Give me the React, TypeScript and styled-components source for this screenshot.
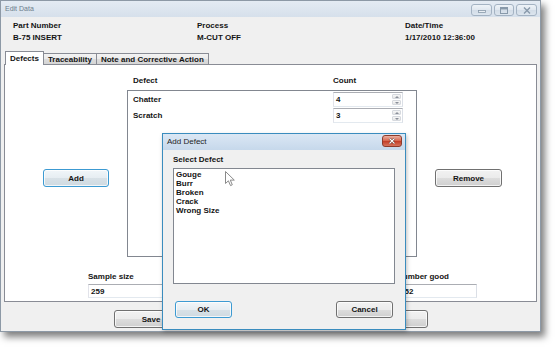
import React from "react";
import styled, { createGlobalStyle } from "styled-components";

const GlobalStyle = createGlobalStyle`
  html, body {
    margin: 0;
    padding: 0;
    background: #ffffff;
  }
  body {
    font-family: "Liberation Sans", Arial, sans-serif;
    font-size: 8px;
    color: #141414;
  }
  * {
    box-sizing: border-box;
  }
`;

const Stage = styled.div`
  position: relative;
  width: 555px;
  height: 351px;
  overflow: hidden;
  background: #ffffff;
`;

const Window = styled.div`
  width: 541px;
  height: 332px;
  display: flex;
  flex-direction: column;
  border: 1px solid #8d99a6;
  background: #f0f0f0;
  box-shadow: 4px 5px 7px rgba(0, 0, 0, 0.5);
`;

const TitleBar = styled.div`
  height: 16px;
  display: flex;
  align-items: flex-start;
  justify-content: space-between;
  background: linear-gradient(#e4ebf3, #d6e0eb);
`;

const Caption = styled.span`
  padding: 4px 0 0 4px;
  font-size: 7px;
  line-height: 8px;
  color: #6d7d8d;
`;

const CaptionButtons = styled.div`
  display: flex;
  gap: 2px;
  margin: 3px 3px 0 0;
`;

const CaptionButton = styled.div<{ $w: number }>`
  width: ${(p) => p.$w}px;
  height: 12px;
  border: 1px solid #a4b3c3;
  border-radius: 3px;
  background: linear-gradient(#eef3f8, #e1e8f0 45%, #d3dde8 55%, #dce5ee);
  display: flex;
  align-items: center;
  justify-content: center;
`;

const Client = styled.div`
  flex: 1;
  display: flex;
  flex-direction: column;
  padding: 0 3px;
`;

const Header = styled.div`
  display: grid;
  grid-template-columns: 184px 208px 1fr;
  margin-top: 3px;
  padding-left: 9px;
`;

const Line = styled.div`
  font-weight: bold;
  line-height: 12px;
  white-space: nowrap;
`;

const TabStrip = styled.div`
  display: flex;
  align-items: flex-end;
  height: 13px;
  margin-top: 7px;
  padding-left: 1px;
  position: relative;
  z-index: 1;
`;

const Tab = styled.div<{ $active?: boolean }>`
  height: ${(p) => (p.$active ? 14 : 11)}px;
  margin-bottom: ${(p) => (p.$active ? -1 : 0)}px;
  margin-left: -1px;
  padding: 0 4px;
  display: flex;
  align-items: center;
  border: 1px solid #898c95;
  border-bottom: none;
  font-weight: bold;
  white-space: nowrap;
  background: ${(p) =>
    p.$active ? "#ffffff" : "linear-gradient(#f3f3f3, #ebebeb 50%, #dddddd 51%, #d5d5d5)"};
  position: relative;
  z-index: ${(p) => (p.$active ? 2 : 1)};

  &:first-child {
    margin-left: 0;
  }
`;

const TabPanel = styled.div`
  height: 238px;
  border: 1px solid #898c95;
  background: #ffffff;
`;

const DefectGrid = styled.div`
  display: grid;
  grid-template-columns: 122px 290px 1fr;
  grid-template-rows: 12px 167px;
  row-gap: 3px;
  padding-top: 10px;
`;

const ColumnHeads = styled.div`
  grid-column: 2;
  grid-row: 1;
  display: grid;
  grid-template-columns: 200px 1fr;
  padding-left: 6px;
  font-weight: bold;
  line-height: 12px;
`;

const ListBox = styled.div<{ $col?: number }>`
  grid-column: ${(p) => p.$col ?? "auto"};
  grid-row: 2;
  border: 1px solid #828790;
  background: #ffffff;
`;

const DefectRows = styled.div`
  display: flex;
  flex-direction: column;
  gap: 1px;
  padding: 1px 0 0 5px;
`;

const DefectRow = styled.div`
  display: grid;
  grid-template-columns: 200px 70px;
  align-items: center;
  height: 15px;
  font-weight: bold;
`;

const Spinner = styled.div`
  height: 15px;
  display: flex;
  align-items: center;
  justify-content: space-between;
  border: 1px solid #abadb3;
  border-color: #abadb3 #dbdfe6 #e3e9ef #e2e3ea;
  padding: 0 1px 0 2px;
`;

const SpinButtons = styled.div`
  width: 9px;
  height: 11px;
  display: flex;
  flex-direction: column;
  gap: 1px;
`;

const SpinHalf = styled.div`
  flex: 1;
  border: 1px solid #d6d9de;
  border-radius: 1px;
  background: linear-gradient(#f7f7f7, #e6e6e6);
  display: flex;
  align-items: center;
  justify-content: center;
`;

const Arrow = styled.div<{ $up?: boolean }>`
  width: 0;
  height: 0;
  border-left: 2px solid transparent;
  border-right: 2px solid transparent;
  ${(p) => (p.$up ? "border-bottom: 2px solid #8a8f99;" : "border-top: 2px solid #8a8f99;")}
`;

const PushButton = styled.button<{ $w: number; $default?: boolean }>`
  width: ${(p) => p.$w}px;
  height: 18px;
  padding: 0;
  font: bold 8px "Liberation Sans", Arial, sans-serif;
  color: #141414;
  border: 1px solid ${(p) => (p.$default ? "#3c9ad2" : "#707070")};
  border-radius: 3px;
  background: ${(p) =>
    p.$default
      ? "linear-gradient(#f1f6f9, #e6edf2 50%, #d8e1e7 51%, #cfdae1)"
      : "linear-gradient(#f2f2f2, #ebebeb 50%, #dddddd 51%, #cfcfcf)"};
  box-shadow: inset 0 0 0 1px rgba(255, 255, 255, 0.75);
`;

const SideButton = styled(PushButton)<{ $left: number }>`
  grid-row: 2;
  align-self: start;
  margin: 79px 0 0 ${(p) => p.$left}px;
`;

const FieldRow = styled.div`
  display: grid;
  grid-template-columns: 83px 80px 229px 80px;
  margin-top: 14px;
`;

const Field = styled.div<{ $col: number }>`
  grid-column: ${(p) => p.$col};
  display: flex;
  flex-direction: column;
`;

const TextBox = styled.div`
  height: 14px;
  margin-top: 1px;
  padding-left: 2px;
  display: flex;
  align-items: center;
  border: 1px solid #abadb3;
  border-color: #abadb3 #dbdfe6 #e3e9ef #e2e3ea;
  background: #ffffff;
  font-weight: bold;
`;

const ButtonRow = styled.div`
  display: flex;
  justify-content: center;
  gap: 164px;
  margin-top: 8px;
`;

const Dialog = styled.div`
  position: absolute;
  left: 162px;
  top: 133px;
  width: 244px;
  height: 197px;
  display: flex;
  flex-direction: column;
  border: 1px solid #3a8cbe;
  background: #f0f0f0;
  box-shadow: 1px 2px 4px rgba(0, 0, 0, 0.25);
`;

const DialogTitle = styled.div`
  height: 16px;
  display: flex;
  justify-content: space-between;
  align-items: flex-start;
  background: linear-gradient(#dbe7f4, #c6d8eb);
`;

const DialogCaption = styled.span`
  padding: 3px 0 0 4px;
  line-height: 10px;
  color: #1e1e1e;
`;

const CloseButton = styled.div`
  width: 20px;
  height: 12px;
  margin: 1px 3px 0 0;
  border: 1px solid #8d3b2b;
  border-radius: 3px;
  background: linear-gradient(#eab1a3, #d86a52 45%, #c4402a 55%, #d6735c);
  display: flex;
  align-items: center;
  justify-content: center;
`;

const DialogBody = styled.div`
  display: flex;
  flex-direction: column;
  padding: 4px 10px 0;
`;

const PickList = styled.div`
  height: 116px;
  margin-top: 2px;
  padding: 1px 2px 0;
  border: 1px solid #828790;
  background: #ffffff;
`;

const PickItem = styled.div`
  font-weight: bold;
  line-height: 9px;
  white-space: nowrap;
`;

const DialogButtons = styled.div`
  display: flex;
  justify-content: space-between;
  margin-top: 17px;
  padding: 0 2px;
`;

const Cursor = styled.svg`
  position: absolute;
  left: 225px;
  top: 171px;
`;

const defects = [
  { name: "Chatter", count: 4 },
  { name: "Scratch", count: 3 },
];

const choices = ["Gouge", "Burr", "Broken", "Crack", "Wrong Size"];

const NumberBox: React.FC<{ value: number }> = ({ value }) => (
  <Spinner>
    <span>{value}</span>
    <SpinButtons>
      <SpinHalf>
        <Arrow $up />
      </SpinHalf>
      <SpinHalf>
        <Arrow />
      </SpinHalf>
    </SpinButtons>
  </Spinner>
);

export default function App() {
  return (
    <Stage>
      <GlobalStyle />
      <Window>
        <TitleBar>
          <Caption>Edit Data</Caption>
          <CaptionButtons>
            <CaptionButton $w={21}>
              <svg width="8" height="6" viewBox="0 0 8 6">
                <rect x="0.5" y="3.5" width="7" height="2" fill="#e9eef3" stroke="#8899aa" strokeWidth="0.8" />
              </svg>
            </CaptionButton>
            <CaptionButton $w={20}>
              <svg width="8" height="7" viewBox="0 0 8 7">
                <rect x="0.5" y="0.5" width="7" height="6" fill="none" stroke="#8899aa" strokeWidth="1" />
                <rect x="1" y="1" width="6" height="1.5" fill="#8899aa" />
              </svg>
            </CaptionButton>
            <CaptionButton $w={21}>
              <svg width="8" height="7" viewBox="0 0 8 7">
                <path d="M1 0.5 L7 6.5 M7 0.5 L1 6.5" stroke="#8899aa" strokeWidth="1.4" />
              </svg>
            </CaptionButton>
          </CaptionButtons>
        </TitleBar>
        <Client>
          <Header>
            <div>
              <Line>Part Number</Line>
              <Line>B-75 INSERT</Line>
            </div>
            <div>
              <Line>Process</Line>
              <Line>M-CUT OFF</Line>
            </div>
            <div>
              <Line>Date/Time</Line>
              <Line>1/17/2010 12:36:00</Line>
            </div>
          </Header>
          <TabStrip>
            <Tab $active>Defects</Tab>
            <Tab>Traceability</Tab>
            <Tab>Note and Corrective Action</Tab>
          </TabStrip>
          <TabPanel>
            <DefectGrid>
              <ColumnHeads>
                <span>Defect</span>
                <span>Count</span>
              </ColumnHeads>
              <SideButton $w={66} $left={38} $default style={{ gridColumn: 1 }}>
                Add
              </SideButton>
              <ListBox $col={2}>
                <DefectRows>
                  {defects.map((d) => (
                    <DefectRow key={d.name}>
                      <span>{d.name}</span>
                      <NumberBox value={d.count} />
                    </DefectRow>
                  ))}
                </DefectRows>
              </ListBox>
              <SideButton $w={67} $left={18} style={{ gridColumn: 3 }}>
                Remove
              </SideButton>
            </DefectGrid>
            <FieldRow>
              <Field $col={2}>
                <Line>Sample size</Line>
                <TextBox>259</TextBox>
              </Field>
              <Field $col={4}>
                <Line>Number good</Line>
                <TextBox>252</TextBox>
              </Field>
            </FieldRow>
          </TabPanel>
          <ButtonRow>
            <PushButton $w={75}>Save</PushButton>
            <PushButton $w={75}>Cancel</PushButton>
          </ButtonRow>
        </Client>
      </Window>

      <Dialog>
        <DialogTitle>
          <DialogCaption>Add Defect</DialogCaption>
          <CloseButton>
            <svg width="8" height="6" viewBox="0 0 8 6">
              <path d="M1.5 0.5 L6.5 5.5 M6.5 0.5 L1.5 5.5" stroke="#5a1f14" strokeWidth="2.2" />
              <path d="M1.5 0.5 L6.5 5.5 M6.5 0.5 L1.5 5.5" stroke="#ffffff" strokeWidth="1.2" />
            </svg>
          </CloseButton>
        </DialogTitle>
        <DialogBody>
          <Line>Select Defect</Line>
          <PickList>
            {choices.map((c) => (
              <PickItem key={c}>{c}</PickItem>
            ))}
          </PickList>
          <DialogButtons>
            <PushButton $w={57} $default style={{ height: 17 }}>
              OK
            </PushButton>
            <PushButton $w={57} style={{ height: 17 }}>
              Cancel
            </PushButton>
          </DialogButtons>
        </DialogBody>
      </Dialog>

      <Cursor width="11" height="16" viewBox="0 0 11 16">
        <path
          d="M0.5 0.5 L0.5 12.5 L3.4 9.8 L5.5 14.6 L7.3 13.8 L5.3 9.1 L9.3 9.1 Z"
          fill="#ffffff"
          stroke="#8a8a8a"
          strokeWidth="1"
          strokeLinejoin="round"
        />
      </Cursor>
    </Stage>
  );
}
